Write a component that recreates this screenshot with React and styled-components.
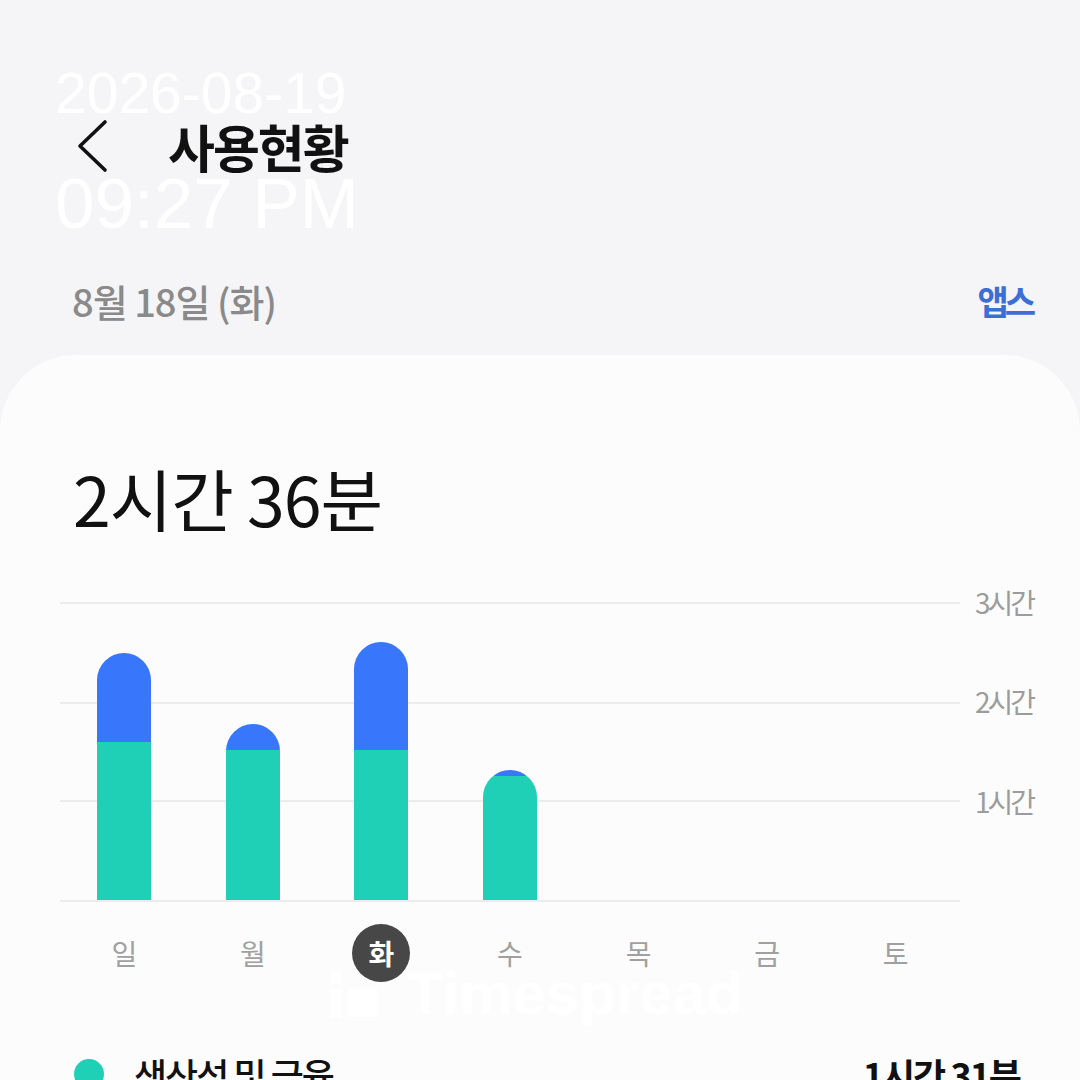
import styled, { createGlobalStyle } from "styled-components";

const Global = createGlobalStyle`
  html, body {
    margin: 0;
    padding: 0;
    background: #f5f5f7;
  }
  body {
    font-family: "Noto Sans CJK KR", "Noto Sans", sans-serif;
  }
`;

const HOUR = 99.3;

const days = [
  { label: "일", teal: 1.59, blue: 0.9 },
  { label: "월", teal: 1.51, blue: 0.26 },
  { label: "화", teal: 1.51, blue: 1.09, selected: true },
  { label: "수", teal: 1.25, blue: 0.06 },
  { label: "목" },
  { label: "금" },
  { label: "토" },
];

const Page = styled.div`
  position: relative;
  width: 1080px;
  height: 1080px;
  overflow: hidden;
  background: #f5f5f7;
`;

const Stamp = styled.div`
  position: absolute;
  left: 55px;
  top: ${(p) => p.$top}px;
  font-family: "Liberation Sans", Arial, sans-serif;
  font-size: ${(p) => p.$size}px;
  line-height: 1;
  color: rgba(255, 255, 255, 0.96);
  white-space: nowrap;
  z-index: 5;
`;

const Header = styled.div`
  display: flex;
  align-items: center;
  height: 60px;
  padding: 116px 0 0 74px;
`;

const Back = styled.button`
  display: flex;
  align-items: center;
  border: 0;
  background: none;
  padding: 0;
  width: 94px;
`;

const Title = styled.h1`
  margin: 0;
  font-size: 51px;
  font-weight: 700;
  color: #111;
  letter-spacing: -2px;
`;

const DateRow = styled.div`
  display: flex;
  justify-content: space-between;
  align-items: center;
  height: 60px;
  margin-top: 94px;
  padding: 0 48px 0 72px;
`;

const DateText = styled.span`
  font-size: 38px;
  font-weight: 500;
  color: #8a8a8a;
  letter-spacing: -1px;
`;

const Apps = styled.span`
  font-size: 34px;
  font-weight: 700;
  color: #3b6fd6;
  letter-spacing: -4px;
`;

const Card = styled.div`
  position: relative;
  margin-top: 25px;
  height: 800px;
  background: #fcfcfc;
  border-radius: 76px 76px 0 0;
  padding: 0 0 0 60px;
`;

const Total = styled.div`
  padding: 98px 0 0 13px;
  font-size: 68px;
  font-weight: 400;
  color: #111;
  line-height: 90px;
  letter-spacing: -1px;
`;

const ChartRow = styled.div`
  display: flex;
  margin-top: 59px;
`;

const Plot = styled.div`
  display: grid;
  grid-template-columns: repeat(7, 1fr);
  align-items: end;
  width: 900px;
  height: 300px;
  background:
    linear-gradient(#ececec, #ececec) 0 0 / 100% 2px no-repeat,
    linear-gradient(#ececec, #ececec) 0 100px / 100% 2px no-repeat,
    linear-gradient(#ececec, #ececec) 0 198px / 100% 2px no-repeat,
    linear-gradient(#ececec, #ececec) 0 298px / 100% 2px no-repeat;
`;

const Column = styled.div`
  display: flex;
  justify-content: center;
  height: 100%;
  align-items: flex-end;
  padding-bottom: 2px;
  box-sizing: border-box;
`;

const Bar = styled.div`
  display: flex;
  flex-direction: column;
  width: 54px;
  border-radius: 27px 27px 0 0;
  overflow: hidden;
`;

const Segment = styled.div`
  background: ${(p) => p.$color};
`;

const Axis = styled.div`
  display: flex;
  flex-direction: column;
  margin: -20px 0 0 15px;
`;

const AxisLabel = styled.span`
  height: ${HOUR}px;
  line-height: 40px;
  font-size: 28px;
  color: #9c9c9c;
  letter-spacing: -3px;
`;

const Days = styled.div`
  display: grid;
  grid-template-columns: repeat(7, 1fr);
  width: 900px;
  margin-top: 22px;
`;

const Day = styled.div`
  justify-self: center;
  display: flex;
  align-items: center;
  justify-content: center;
  width: 58px;
  height: 58px;
  border-radius: 50%;
  font-size: 28px;
  font-weight: ${(p) => (p.$selected ? 700 : 400)};
  color: ${(p) => (p.$selected ? "#fff" : "#a0a0a0")};
  background: ${(p) => (p.$selected ? "#474747" : "transparent")};
`;

const Watermark = styled.div`
  position: absolute;
  left: 330px;
  top: 609px;
  display: flex;
  align-items: center;
  gap: 30px;
  font-family: "Liberation Sans", Arial, sans-serif;
  font-weight: 700;
  font-size: 60px;
  line-height: 1;
  color: rgba(255, 255, 255, 0.95);
`;

const Legend = styled.div`
  display: flex;
  justify-content: space-between;
  align-items: center;
  margin-top: 66px;
  padding-right: 60px;
`;

const LegendName = styled.div`
  display: flex;
  align-items: center;
  gap: 30px;
  font-size: 36px;
  font-weight: 500;
  color: #111;
  letter-spacing: -2px;
`;

const Dot = styled.span`
  width: 30px;
  height: 30px;
  border-radius: 50%;
  margin-left: 14px;
  background: ${(p) => p.$color};
`;

const LegendValue = styled.span`
  font-size: 36px;
  font-weight: 700;
  color: #111;
  letter-spacing: -2px;
`;

export default function App() {
  return (
    <Page>
      <Global />
      <Stamp $top={65} $size={57}>2026-08-19</Stamp>
      <Stamp $top={168} $size={71}>09:27 PM</Stamp>
      <Header>
        <Back aria-label="뒤로">
          <svg width="36" height="54" viewBox="0 0 36 54">
            <path d="M31 3 L6 27 L31 51" fill="none" stroke="#111" strokeWidth="3.6" strokeLinecap="round" strokeLinejoin="round" />
          </svg>
        </Back>
        <Title>사용현황</Title>
      </Header>
      <DateRow>
        <DateText>8월 18일 (화)</DateText>
        <Apps>앱스</Apps>
      </DateRow>
      <Card>
        <Total>2시간 36분</Total>
        <ChartRow>
          <Plot>
            {days.map((d) => (
              <Column key={d.label}>
                {d.teal ? (
                  <Bar>
                    <Segment $color="#3876fc" style={{ height: d.blue * HOUR }} />
                    <Segment $color="#1fcfb6" style={{ height: d.teal * HOUR }} />
                  </Bar>
                ) : null}
              </Column>
            ))}
          </Plot>
          <Axis>
            <AxisLabel>3시간</AxisLabel>
            <AxisLabel>2시간</AxisLabel>
            <AxisLabel>1시간</AxisLabel>
          </Axis>
        </ChartRow>
        <Days>
          {days.map((d) => (
            <Day key={d.label} $selected={d.selected}>{d.label}</Day>
          ))}
        </Days>
        <Watermark>
          <svg width="47" height="45" viewBox="0 0 47 45">
            <rect x="0" y="0" width="12" height="12" fill="currentColor" />
            <rect x="0" y="17" width="12" height="28" fill="currentColor" />
            <rect x="17" y="17" width="30" height="28" fill="currentColor" />
          </svg>
          Timespread
        </Watermark>
        <Legend>
          <LegendName>
            <Dot $color="#1fcfb6" />
            생산성 및 금융
          </LegendName>
          <LegendValue>1시간 31분</LegendValue>
        </Legend>
      </Card>
    </Page>
  );
}
